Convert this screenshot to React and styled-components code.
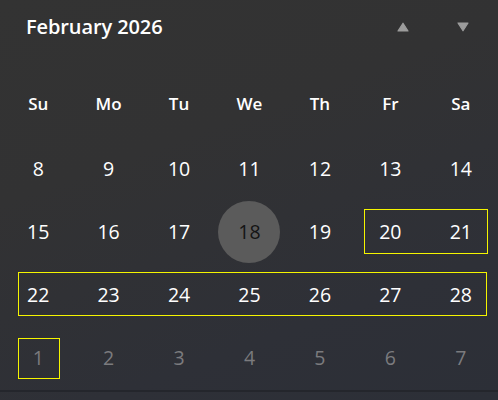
import React from "react";
import styled, { createGlobalStyle } from "styled-components";

const Global = createGlobalStyle`
  html, body { margin: 0; padding: 0; background: #2f3035; }
  * { box-sizing: border-box; }
`;

const Panel = styled.div`
  width: 498px;
  height: 400px;
  overflow: hidden;
  background: linear-gradient(160deg, #333333 0%, #323233 35%, #2e3037 75%, #2c2f37 100%);
  font-family: "Open Sans", "Noto Sans", sans-serif;
  color: #ffffff;
  display: flex;
  flex-direction: column;
`;

const Header = styled.div`
  height: 72px;
  display: flex;
  align-items: flex-start;
  padding: 13px 0 0 26px;
`;

const Title = styled.div`
  font-size: 20px;
  font-weight: 600;
  line-height: 28px;
  flex: 1;
  letter-spacing: -0.1px;
`;

const Arrows = styled.div`
  display: flex;
  gap: 48px;
  padding: 9px 29px 0 0;
`;

const Arrow = styled.svg`
  width: 12px;
  height: 10px;
  display: block;
`;

const DayNames = styled.div`
  height: 62px;
  display: grid;
  grid-template-columns: repeat(7, 1fr);
  padding: 0 2px 0 3px;
  align-items: center;
`;

const DayName = styled.div`
  text-align: center;
  font-size: 17px;
  font-weight: 600;
`;

const Weeks = styled.div`
  padding-top: 3px;
  display: flex;
  flex-direction: column;
`;

const Week = styled.div`
  position: relative;
  height: 63px;
  display: grid;
  grid-template-columns: repeat(7, 1fr);
  padding: 0 2px 0 3px;
  align-items: center;
`;

const Cell = styled.div`
  display: flex;
  align-items: center;
  justify-content: center;
  height: 63px;
`;

const Day = styled.div`
  width: 62px;
  height: 62px;
  border-radius: 50%;
  display: flex;
  align-items: center;
  justify-content: center;
  font-size: 19.5px;
  font-weight: 400;
  color: ${(p) => (p.$today ? "#141414" : p.$dim ? "#7b7b7e" : "#ffffff")};
  background: ${(p) => (p.$today ? "#5b5b5b" : "transparent")};
`;

const Highlight = styled.div`
  position: absolute;
  left: ${(p) => p.$left}px;
  top: ${(p) => p.$top}px;
  width: ${(p) => p.$width}px;
  height: ${(p) => p.$height}px;
  border: 1px solid #f5f500;
  pointer-events: none;
`;

const Divider = styled.div`
  height: 2px;
  margin-top: 1px;
  background: #24262c;
`;

const names = ["Su", "Mo", "Tu", "We", "Th", "Fr", "Sa"];
const weeks = [
  { days: [8, 9, 10, 11, 12, 13, 14] },
  { days: [15, 16, 17, 18, 19, 20, 21], box: { left: 364, top: 9, width: 124, height: 45 } },
  { days: [22, 23, 24, 25, 26, 27, 28], box: { left: 18, top: 9, width: 469, height: 44 } },
  { days: [1, 2, 3, 4, 5, 6, 7], dim: true, box: { left: 18, top: 12, width: 42, height: 41 } },
];

export default function App() {
  return (
    <>
      <Global />
      <Panel>
        <Header>
          <Title>February 2026</Title>
          <Arrows>
            <Arrow viewBox="0 0 12 10">
              <path d="M6 1.2 L11 9 L1 9 Z" fill="#9c9c9c" stroke="#9c9c9c" strokeWidth="1.2" strokeLinejoin="round" />
            </Arrow>
            <Arrow viewBox="0 0 12 10">
              <path d="M1 1 L11 1 L6 8.8 Z" fill="#9c9c9c" stroke="#9c9c9c" strokeWidth="1.2" strokeLinejoin="round" />
            </Arrow>
          </Arrows>
        </Header>
        <DayNames>
          {names.map((n) => (
            <DayName key={n}>{n}</DayName>
          ))}
        </DayNames>
        <Weeks>
          {weeks.map((w, i) => (
            <Week key={i}>
              {w.days.map((d) => (
                <Cell key={d}>
                  <Day $dim={w.dim} $today={!w.dim && d === 18}>{d}</Day>
                </Cell>
              ))}
              {w.box && (
                <Highlight $left={w.box.left} $top={w.box.top} $width={w.box.width} $height={w.box.height} />
              )}
            </Week>
          ))}
        </Weeks>
        <Divider />
      </Panel>
    </>
  );
}
